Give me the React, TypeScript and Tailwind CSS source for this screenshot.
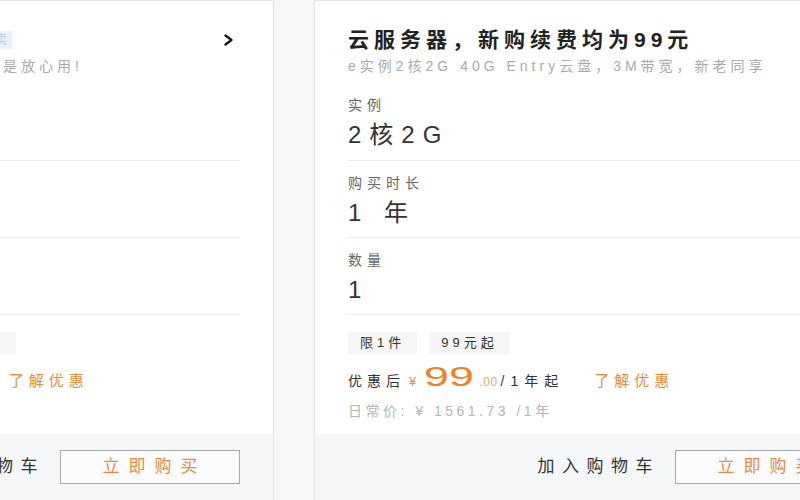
// ── Offer cards ───────────────────────────────────────────────────────────────
// Two side-by-side cloud server offers; the strip is shifted left so only the
// tail of the first card shows, like a carousel mid-scroll.

interface Offer {
  title: string;
  badge?: string;
  subtitle: string;
  spec: string;
  duration: string;
  qty: string;
  tags: string[];
  price: string;
  cents: string;
  unit: string;
  listPrice: string;
  priceGap: string; // room for the widened price digits
  learnGap: string;
}

const offers: Offer[] = [
  {
    title: "轻量应用服务器",
    badge: "热卖",
    subtitle: "新购续费同价，新老用户，买的就是放心用!",
    spec: "2核4G",
    duration: "1 年",
    qty: "1",
    tags: ["限1件", "99元起", "新老用户享"],
    price: "199",
    cents: ".00",
    unit: "/1年起",
    listPrice: "日常价: ¥ 2281.61 /1年",
    priceGap: "mr-[34px]",
    learnGap: "ml-[34px]",
  },
  {
    title: "云服务器，新购续费均为99元",
    subtitle: "e实例2核2G 40G Entry云盘，3M带宽，新老同享",
    spec: "2核2G",
    duration: "1 年",
    qty: "1",
    tags: ["限1件", "99元起"],
    price: "99",
    cents: ".00",
    unit: "/1年起",
    listPrice: "日常价: ¥ 1561.73 /1年",
    priceGap: "mr-[24px]",
    learnGap: "ml-[30px]",
  },
];

// ── Sub-components ────────────────────────────────────────────────────────────

function Chevron() {
  return (
    <svg viewBox="0 0 12 12" className="w-[12px] h-[12px] mr-[5px] shrink-0" fill="none">
      <path d="M2.5 1.5 L8.5 6 L2.5 10.5" stroke="#111" strokeWidth="2.2" strokeLinecap="round" strokeLinejoin="round" />
    </svg>
  );
}

function Field({ label, value, className }: { label: string; value: string; className: string }) {
  return (
    <>
      <div className={className}>
        <div className="text-[14px] leading-[18px] tracking-[5px] text-[#666]">{label}</div>
        <div className="mt-[6px] h-[30px] text-[24px] leading-[30px] tracking-[8px] text-[#333]">{value}</div>
      </div>
      <div className="h-px bg-[#ebebeb]" />
    </>
  );
}

function OfferCard({ offer }: { offer: Offer }) {
  return (
    <div className="w-[575px] shrink-0 flex flex-col bg-white border border-b-0 border-[#e4e4e4]">
      <div className="px-[33px]">
        {/* Header */}
        <div className="pt-[25px] flex items-center justify-between">
          <div className="flex items-center whitespace-nowrap">
            <span className={offer.badge ? "w-[245px] shrink-0 text-[21px] leading-[28px] font-bold tracking-[5px] text-[#222]" : "text-[21px] leading-[28px] font-bold tracking-[5px] text-[#222]"}>
              {offer.title}
            </span>
            {offer.badge && (
              <span className="px-[5px] text-[12px] leading-[18px] text-[#b3cff0] bg-[#eaf2fd]">{offer.badge}</span>
            )}
          </div>
          <Chevron />
        </div>
        <div className="mt-[2px] text-[14px] leading-[20px] tracking-[4px] text-[#aaa] whitespace-nowrap">
          {offer.subtitle}
        </div>

        {/* Options */}
        <Field label="实例" value={offer.spec} className="pt-[20px] pb-[10px]" />
        <Field label="购买时长" value={offer.duration} className="pt-[13px] pb-[9px]" />
        <Field label="数量" value={offer.qty} className="pt-[13px] pb-[9px]" />

        {/* Tags */}
        <div className="mt-[17px] flex gap-[12px]">
          {offer.tags.map((t) => (
            <span key={t} className="h-[22px] px-[12px] bg-[#f5f5f5] text-[13px] leading-[22px] tracking-[4px] text-[#333] whitespace-nowrap">
              {t}
            </span>
          ))}
        </div>

        {/* Price */}
        <div className="mt-[7px] h-[32px] flex items-baseline whitespace-nowrap">
          <span className="text-[14px] tracking-[5px] text-[#333]">优惠后</span>
          <span className="ml-[4px] text-[13px] text-[#f0892c]">¥</span>
          <span className={`${offer.priceGap} ml-[8px] inline-block origin-left scale-x-[1.6] text-[28px] leading-[32px] text-[#ef8127]`}>
            {offer.price}
          </span>
          <span className="text-[12px] tracking-[0.5px] text-[#f3a566]">{offer.cents}</span>
          <span className="ml-[3px] text-[14px] tracking-[6px] text-[#333]">{offer.unit}</span>
          <span className={`${offer.learnGap} text-[15px] tracking-[5px] text-[#eb8a35]`}>了解优惠</span>
        </div>
        <div className="mt-[9px] text-[14px] leading-[18px] tracking-[3.5px] text-[#b5b5b5] whitespace-nowrap">
          {offer.listPrice}
        </div>
      </div>

      {/* Footer */}
      <div className="mt-[14px] flex-1 bg-[#f5f6f8] px-[33px] flex items-center justify-end gap-[15px]">
        <span className="text-[17px] tracking-[7.5px] text-[#333] whitespace-nowrap">加入购物车</span>
        <button className="w-[180px] h-[34px] shrink-0 border border-[#a8a8a8] bg-[#fafbfc] pl-[9px] text-[17px] tracking-[9px] text-[#ec8b3d] whitespace-nowrap">
          立即购买
        </button>
      </div>
    </div>
  );
}

// ── Main component ────────────────────────────────────────────────────────────

export default function App() {
  return (
    <div className="w-[800px] h-[500px] overflow-hidden bg-[#f7f7f7] font-['Liberation_Sans','Noto_Sans_CJK_SC',sans-serif]">
      <div className="h-full flex gap-10 -ml-[301px]">
        {offers.map((o) => (
          <OfferCard key={o.title} offer={o} />
        ))}
      </div>
    </div>
  );
}
